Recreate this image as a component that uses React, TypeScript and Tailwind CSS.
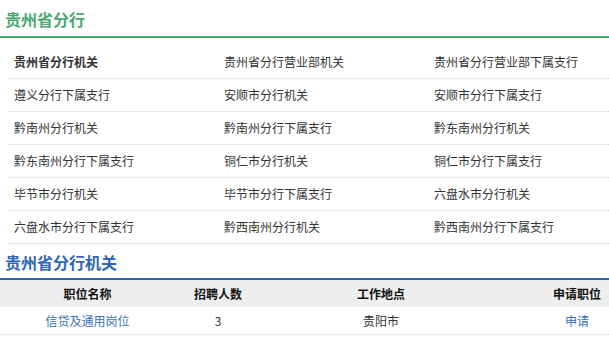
import React from 'react';

const branches: string[] = [
  '贵州省分行机关', '贵州省分行营业部机关', '贵州省分行营业部下属支行',
  '遵义分行下属支行', '安顺市分行机关', '安顺市分行下属支行',
  '黔南州分行机关', '黔南州分行下属支行', '黔东南州分行机关',
  '黔东南州分行下属支行', '铜仁市分行机关', '铜仁市分行下属支行',
  '毕节市分行机关', '毕节市分行下属支行', '六盘水市分行机关',
  '六盘水市分行下属支行', '黔西南州分行机关', '黔西南州分行下属支行',
];

const rows: string[][] = [];
for (let i = 0; i < branches.length; i += 3) rows.push(branches.slice(i, i + 3));

const font = { fontFamily: '"Microsoft YaHei", "Noto Sans CJK SC", "Noto Sans", sans-serif' };

export default function App() {
  return (
    <div className="w-[609px] h-[343px] overflow-hidden bg-white text-[#333]" style={font}>
      {/* section: branch list */}
      <div className="border-b-2 border-[#4aa86f] pl-[5px] pt-[8px] pb-[5px]">
        <h2 className="text-[16px] leading-[23px] font-bold text-[#4aa86f]">贵州省分行</h2>
      </div>
      <div className="pl-2 pt-[8px]">
        {rows.map((row, r) => (
          <div key={r} className="grid grid-cols-[210px_210px_1fr] h-[33px] items-center border-b border-dotted border-[#d6d6d6] text-[12px]">
            {row.map((name, c) => (
              <span key={c} className={`pl-[6px] ${r === 0 && c === 0 ? 'font-bold' : ''}`}>{name}</span>
            ))}
          </div>
        ))}
      </div>

      {/* section: jobs table */}
      <div className="border-b-2 border-[#2d66b3] pl-[5px] pt-[7px] pb-[4px]">
        <h2 className="text-[16px] leading-[23px] font-bold text-[#2d66b3]">贵州省分行机关</h2>
      </div>
      <div className="w-[653px] text-[12px]">
        <div className="grid grid-cols-[175px_86px_240px_152px] h-[27px] items-center bg-[#eeeeee] font-bold text-[#111] text-center">
          <span>职位名称</span>
          <span>招聘人数</span>
          <span>工作地点</span>
          <span>申请职位</span>
        </div>
        <div className="grid grid-cols-[175px_86px_240px_152px] h-[28px] items-center text-center border-b border-dotted border-[#d6d6d6]">
          <span className="text-[#3a6fc0]">信贷及通用岗位</span>
          <span>3</span>
          <span>贵阳市</span>
          <span className="text-[#3a6fc0]">申请</span>
        </div>
      </div>
    </div>
  );
}
